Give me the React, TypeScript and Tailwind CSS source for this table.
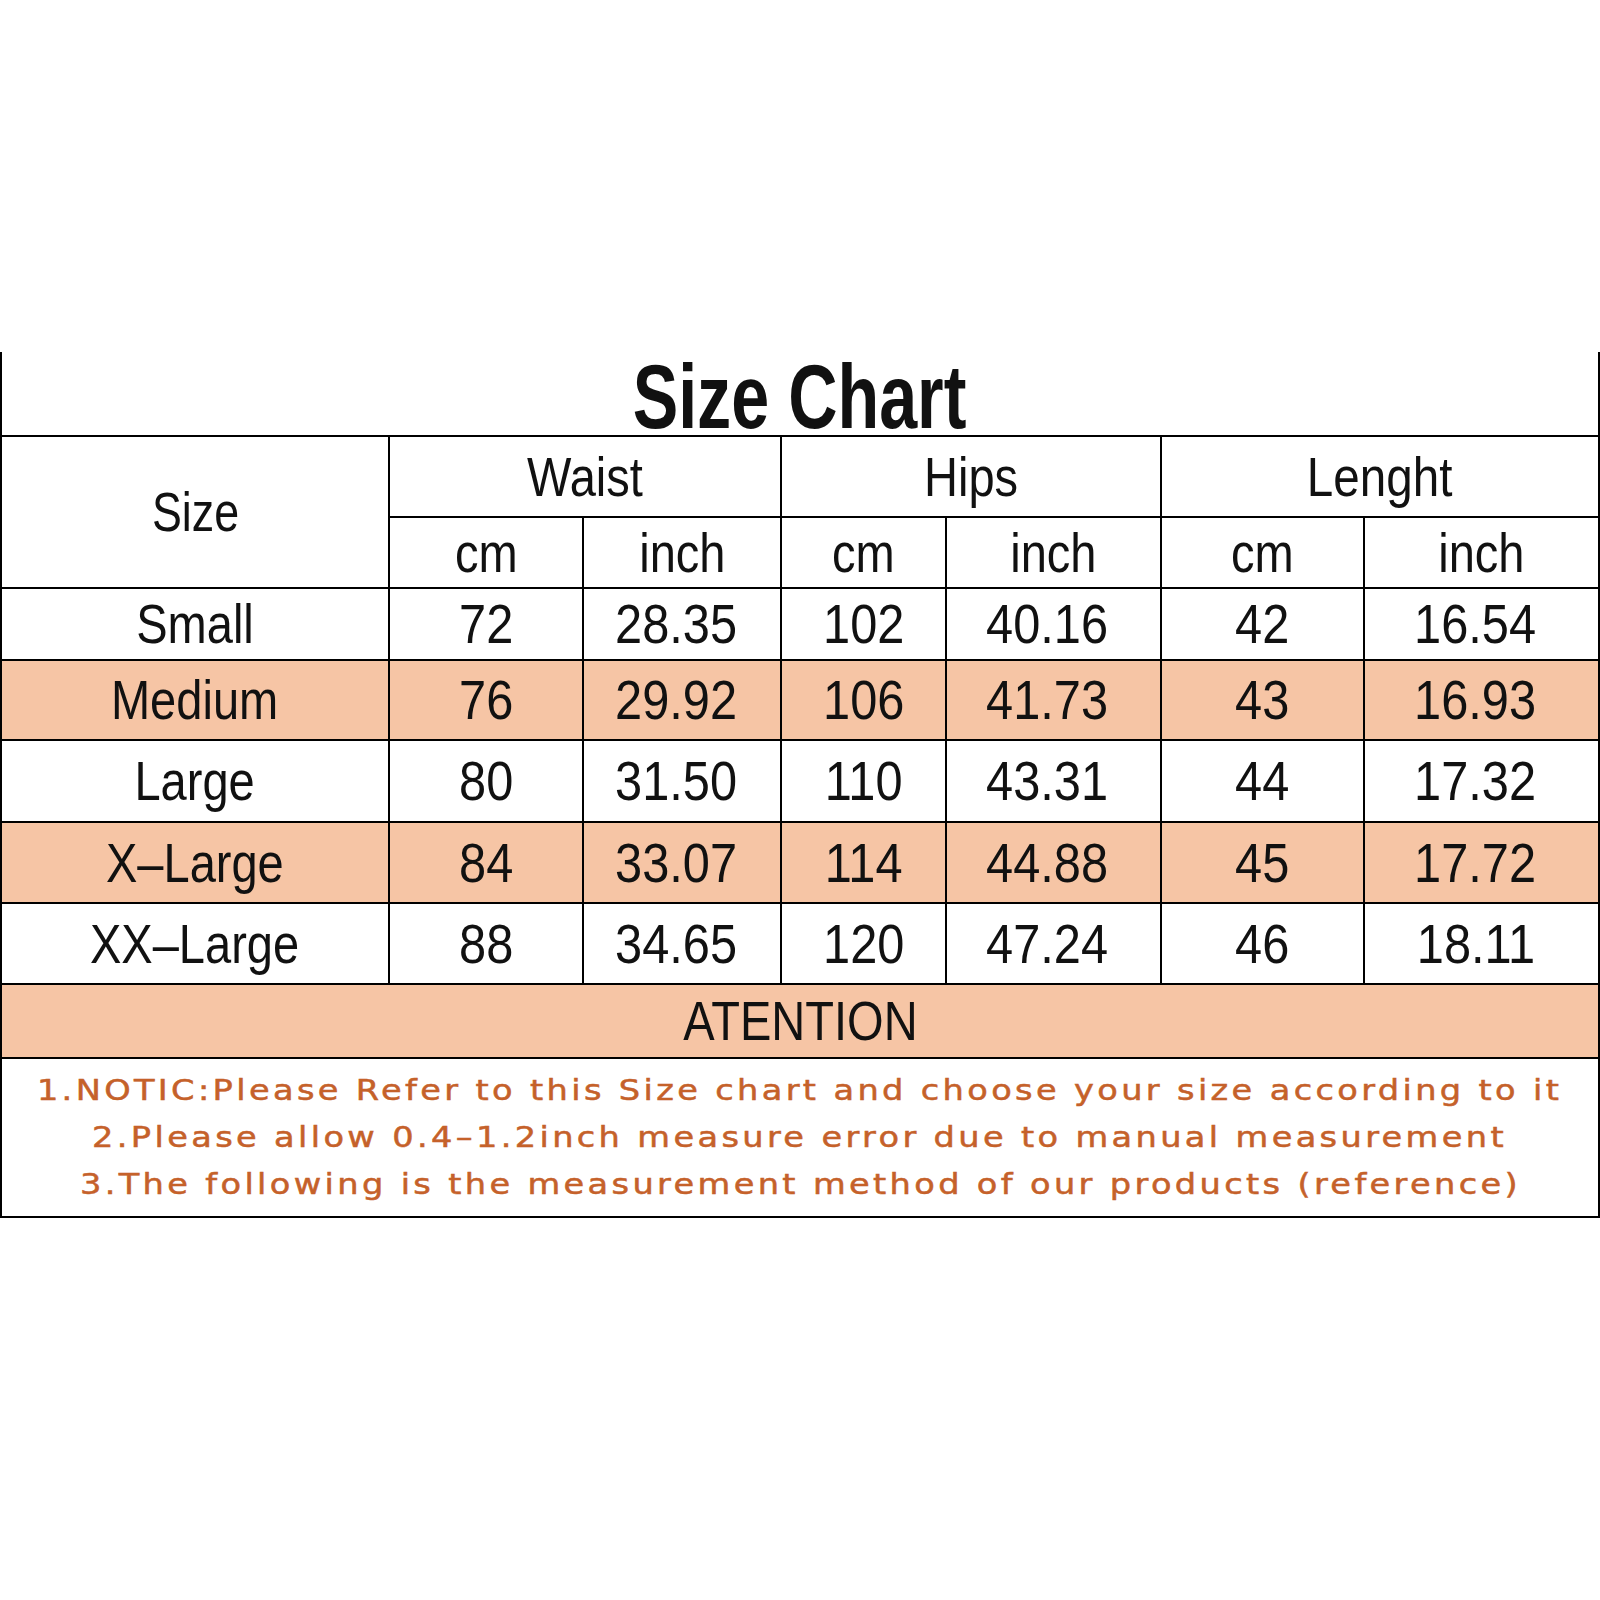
import React from "react";

const PEACH = "bg-[#f6c5a5]";

function T({ children, className = "" }: { children: React.ReactNode; className?: string }) {
  return (
    <span className={`inline-block origin-center whitespace-nowrap leading-none ${className}`}>
      {children}
    </span>
  );
}

const rows = [
  { size: "Small", v: ["72", "28.35", "102", "40.16", "42", "16.54"], peach: false, h: "h-[70px]" },
  { size: "Medium", v: ["76", "29.92", "106", "41.73", "43", "16.93"], peach: true, h: "h-[78px]" },
  { size: "Large", v: ["80", "31.50", "110", "43.31", "44", "17.32"], peach: false, h: "h-[80px]" },
  { size: "X-Large", v: ["84", "33.07", "114", "44.88", "45", "17.72"], peach: true, h: "h-[79px]" },
  { size: "XX-Large", v: ["88", "34.65", "120", "47.24", "46", "18.11"], peach: false, h: "h-[79px]" },
];

const notes = [
  "1.NOTIC:Please Refer to this Size chart and choose your size according to it",
  "2.Please allow 0.4–1.2inch measure error due to manual measurement",
  "3.The following is the measurement method of our products (reference)",
];

export default function App() {
  const cell = "flex items-center justify-center";
  return (
    <div className="w-[1600px] h-[1600px] bg-white pt-[352px] font-['Liberation_Sans',Arial,sans-serif] text-[#111]">
      <div className="grid grid-cols-[386px_192px_196px_163px_213px_201px_1fr] gap-[2px] bg-black px-[2px] pb-[2px]">
        {/* title */}
        <div className="col-span-7 h-[83px] bg-white flex items-end justify-center">
          <T className="text-[91px] font-bold scale-x-[0.75] translate-y-[7px]">Size Chart</T>
        </div>
        {/* header row 1 */}
        <div className={`row-span-2 bg-white ${cell}`}>
          <T className="text-[56px] scale-x-[0.8]">Size</T>
        </div>
        <div className={`col-span-2 h-[79px] bg-white ${cell}`}>
          <T className="text-[56px] scale-x-[0.84]">Waist</T>
        </div>
        <div className={`col-span-2 h-[79px] bg-white ${cell}`}>
          <T className="text-[56px] scale-x-[0.84]">Hips</T>
        </div>
        <div className={`col-span-2 h-[79px] bg-white ${cell}`}>
          <T className="text-[56px] scale-x-[0.85]">Lenght</T>
        </div>
        {/* header row 2 */}
        {["cm", "inch", "cm", "inch", "cm", "inch"].map((u, i) => (
          <div key={i} className={`h-[69px] bg-white ${cell}`}>
            <T className="text-[56px] scale-x-[0.84]">{u}</T>
          </div>
        ))}
        {rows.map((r) => (
          <React.Fragment key={r.size}>
            <div className={`${r.h} ${r.peach ? PEACH : "bg-white"} ${cell}`}>
              <T className="text-[56px] scale-x-[0.84]">{r.size.replace("-", "–")}</T>
            </div>
            {r.v.map((x, i) => (
              <div
                key={i}
                className={`${r.h} ${r.peach ? PEACH : "bg-white"} ${cell} ${i % 2 === 1 ? "pr-[12px]" : ""}`}
              >
                <T className="text-[56px] scale-x-[0.87]">{x}</T>
              </div>
            ))}
          </React.Fragment>
        ))}
        <div className={`col-span-7 h-[72px] ${PEACH} ${cell}`}>
          <T className="text-[56px] scale-x-[0.84]">ATENTION</T>
        </div>
        <div className="col-span-7 h-[157px] bg-white flex flex-col items-center justify-center font-['DejaVu_Sans',sans-serif] text-[28px] leading-[47px] tracking-[2.8px] text-[#c5612a] [-webkit-text-stroke:0.5px_#c5612a]">
          {notes.map((n) => (
            <div key={n} className="inline-block whitespace-nowrap origin-center scale-x-[1.2]">
              {n}
            </div>
          ))}
        </div>
      </div>
    </div>
  );
}
